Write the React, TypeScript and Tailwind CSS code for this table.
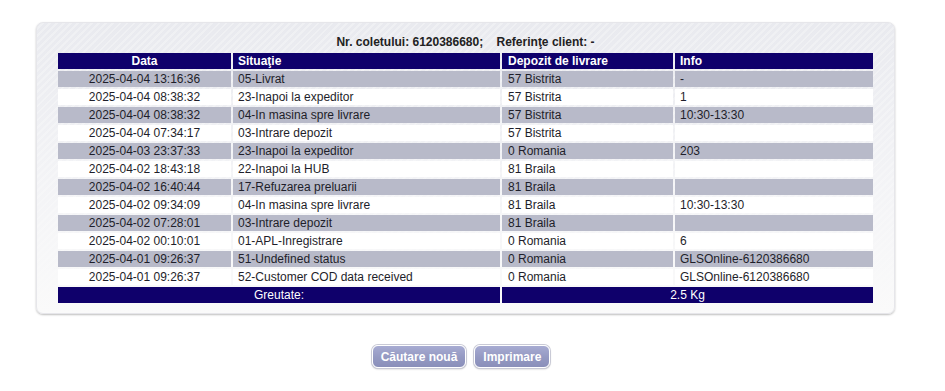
import React from 'react';

type Row = { date: string; status: string; depot: string; info: string };

const rows: Row[] = [
  { date: '2025-04-04 13:16:36', status: '05-Livrat', depot: '57 Bistrita', info: '-' },
  { date: '2025-04-04 08:38:32', status: '23-Inapoi la expeditor', depot: '57 Bistrita', info: '1' },
  { date: '2025-04-04 08:38:32', status: '04-In masina spre livrare', depot: '57 Bistrita', info: '10:30-13:30' },
  { date: '2025-04-04 07:34:17', status: '03-Intrare depozit', depot: '57 Bistrita', info: '' },
  { date: '2025-04-03 23:37:33', status: '23-Inapoi la expeditor', depot: '0 Romania', info: '203' },
  { date: '2025-04-02 18:43:18', status: '22-Inapoi la HUB', depot: '81 Braila', info: '' },
  { date: '2025-04-02 16:40:44', status: '17-Refuzarea preluarii', depot: '81 Braila', info: '' },
  { date: '2025-04-02 09:34:09', status: '04-In masina spre livrare', depot: '81 Braila', info: '10:30-13:30' },
  { date: '2025-04-02 07:28:01', status: '03-Intrare depozit', depot: '81 Braila', info: '' },
  { date: '2025-04-02 00:10:01', status: '01-APL-Inregistrare', depot: '0 Romania', info: '6' },
  { date: '2025-04-01 09:26:37', status: '51-Undefined status', depot: '0 Romania', info: 'GLSOnline-6120386680' },
  { date: '2025-04-01 09:26:37', status: '52-Customer COD data received', depot: '0 Romania', info: 'GLSOnline-6120386680' },
];

export default function App() {
  return (
    <div className="min-h-[391px] bg-white pt-[22px] font-['Liberation_Sans',Arial,sans-serif] text-[12px] text-[#1e1e2a]">
      {/* Tracking panel */}
      <div className="ml-[36px] w-[859px] rounded-[7px] border border-[#e6e6ea] bg-[linear-gradient(to_bottom,rgba(250,250,251,0)_0%,rgba(250,250,251,0.6)_55%,#fafafa_100%),repeating-linear-gradient(135deg,#e9eaef_0px,#e9eaef_3px,#eff0f3_3px,#eff0f3_5px)] px-[19px] pb-[8px] pt-[11px] shadow-[0_1px_2px_rgba(0,0,0,0.25)]">
        <div className="text-center font-bold leading-[16px] text-[#222]">
          Nr. coletului: 6120386680;&nbsp;&nbsp;&nbsp; Referinţe client: -
        </div>
        <table className="mt-[1px] border-separate border-spacing-[2px] leading-[16px]">
          <thead>
            <tr className="bg-[#0f006b] font-bold text-white">
              <th className="h-[16px] w-[173px] p-0 text-center font-bold">Data</th>
              <th className="h-[16px] w-[267px] p-0 pl-[5px] text-left font-bold">Situaţie</th>
              <th className="h-[16px] w-[171px] p-0 pl-[6px] text-left font-bold">Depozit de livrare</th>
              <th className="h-[16px] w-[198px] p-0 pl-[5px] text-left font-bold">Info</th>
            </tr>
          </thead>
          <tbody>
            {rows.map((r, i) => (
              <tr key={i} className={i % 2 === 0 ? 'bg-[#b8bac9]' : 'bg-white'}>
                <td className="h-[16px] p-0 text-center">{r.date}</td>
                <td className="h-[16px] p-0 pl-[5px]">{r.status}</td>
                <td className="h-[16px] p-0 pl-[6px]">{r.depot}</td>
                <td className="h-[16px] p-0 pl-[5px]">{r.info}</td>
              </tr>
            ))}
            <tr className="bg-[#0f006b] text-white">
              <td colSpan={2} className="h-[16px] p-0 text-center">Greutate:</td>
              <td colSpan={2} className="h-[16px] p-0 text-center">2.5 Kg</td>
            </tr>
          </tbody>
        </table>
      </div>

      {/* Actions */}
      <div className="ml-[36px] mt-[31px] flex w-[850px] justify-center gap-[8px]">
        <button className="h-[23px] rounded-[6px] border border-white bg-[linear-gradient(to_bottom,#a7abd2_0%,#9499c2_55%,#8a8fba_100%)] px-[8px] font-bold text-white shadow-[0_0_0_1px_#c9cad6,0_1px_2px_rgba(0,0,0,0.3)]">
          Căutare nouă
        </button>
        <button className="h-[23px] rounded-[6px] border border-white bg-[linear-gradient(to_bottom,#a7abd2_0%,#9499c2_55%,#8a8fba_100%)] px-[8px] font-bold text-white shadow-[0_0_0_1px_#c9cad6,0_1px_2px_rgba(0,0,0,0.3)]">
          Imprimare
        </button>
      </div>
    </div>
  );
}
